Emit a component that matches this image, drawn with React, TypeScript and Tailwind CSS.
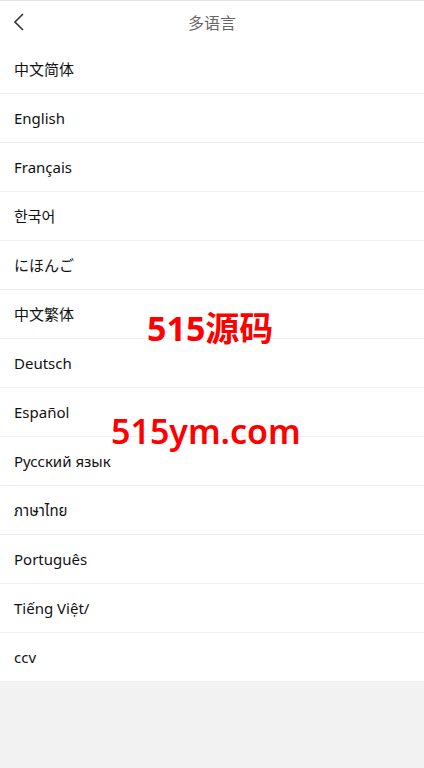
import React from 'react'

const languages = [
  '中文简体',
  'English',
  'Français',
  '한국어',
  'にほんご',
  '中文繁体',
  'Deutsch',
  'Español',
  'Русский язык',
  'ภาษาไทย',
  'Português',
  'Tiếng Việt/',
  'ccv',
]

const font = 'font-["Noto_Sans","Noto_Sans_CJK_SC","Noto_Sans_Thai",sans-serif]'

export default function App() {
  return (
    <div className={`relative min-h-[768px] bg-[#f2f2f2] ${font}`}>
      {/* 顶部导航 */}
      <div className="relative flex h-[45px] items-center justify-center border-t border-[#e5e5e5] bg-white">
        <button className="absolute left-[12px] top-[11px] text-[#333]">
          <svg width="14" height="20" viewBox="0 0 14 20" fill="none">
            <path d="M11 2 L3 10 L11 18" stroke="#333" strokeWidth="1.6" />
          </svg>
        </button>
        <span className="text-[16px] text-[#666]">多语言</span>
      </div>

      {/* 语言列表 */}
      <ul className="bg-white">
        {languages.map((lang) => (
          <li
            key={lang}
            className="flex h-[49px] items-center border-b border-[#f0f0f0] pl-[14px] text-[15px] text-[#111]"
          >
            {lang}
          </li>
        ))}
      </ul>

      {/* 水印 */}
      <div className="pointer-events-none absolute left-[147px] top-[311px] text-[34px] font-bold leading-none text-[#ff0000]">
        515源码
      </div>
      <div className="pointer-events-none absolute left-[111px] top-[414px] text-[34px] font-semibold leading-none text-[#ff0000]">
        515ym.com
      </div>
    </div>
  )
}
